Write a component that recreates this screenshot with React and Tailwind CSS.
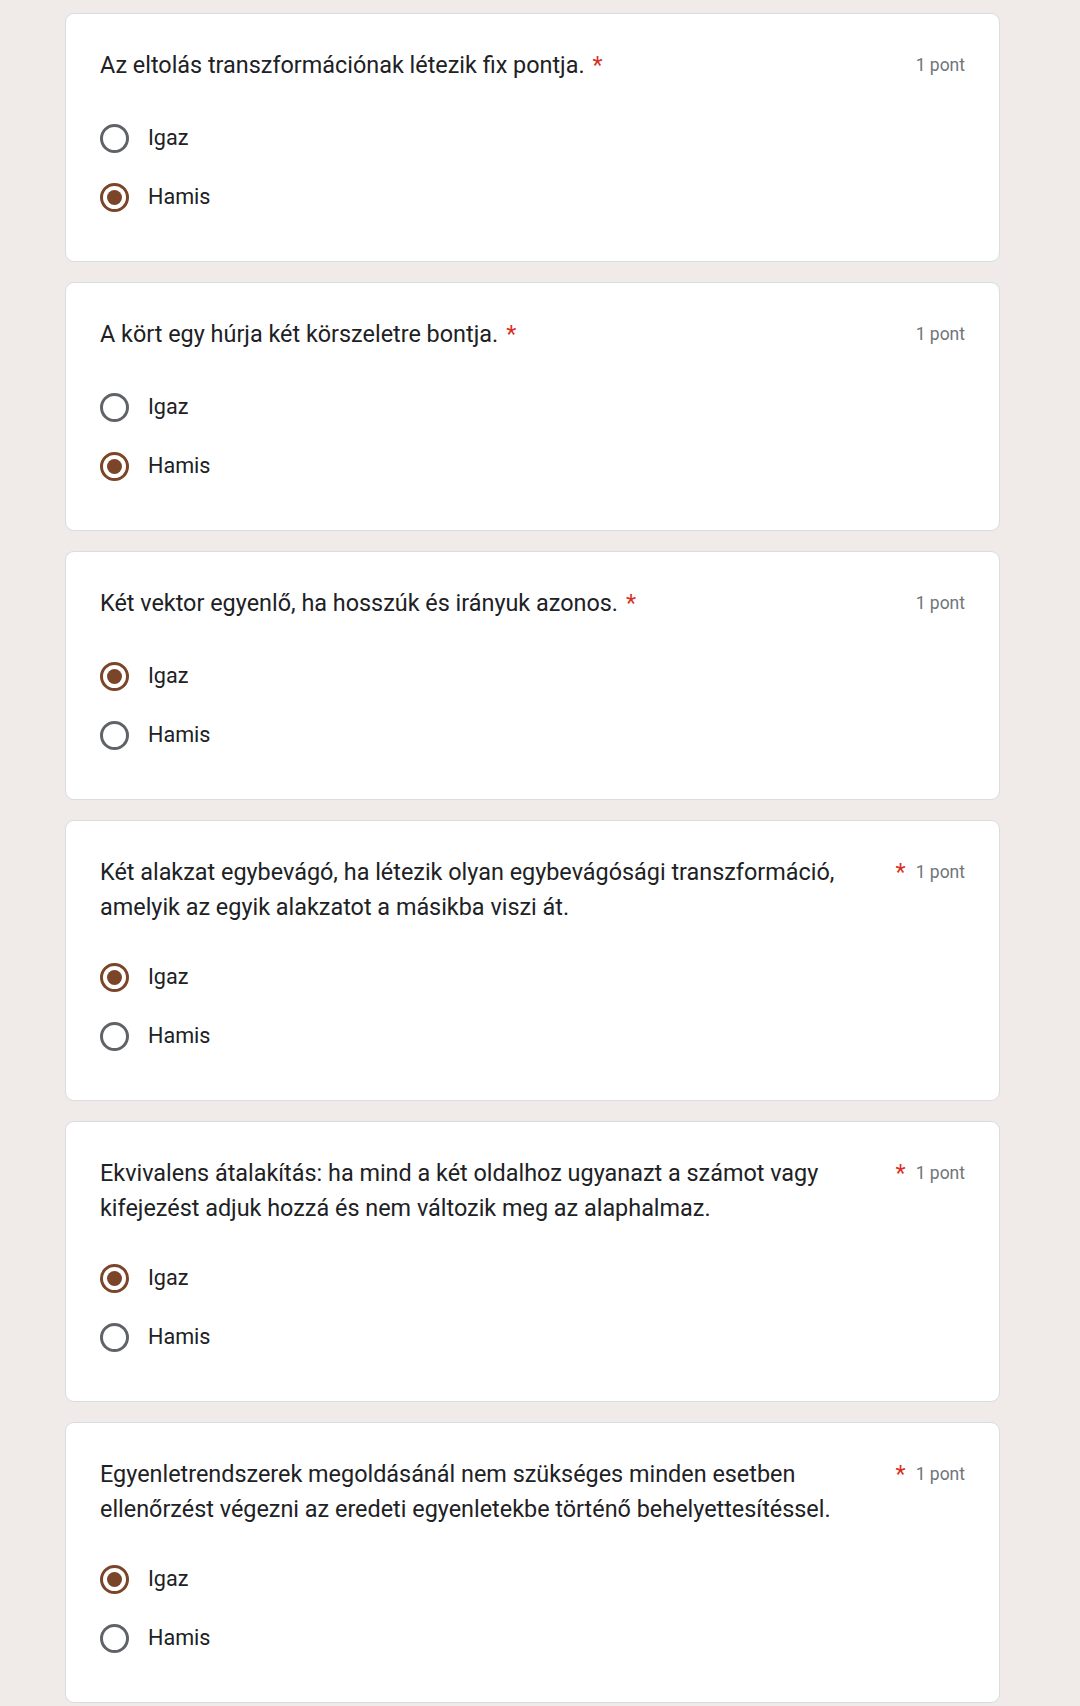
const questions = [
  { text: 'Az eltolás transzformációnak létezik fix pontja.', answer: 'Hamis' },
  { text: 'A kört egy húrja két körszeletre bontja.', answer: 'Hamis' },
  { text: 'Két vektor egyenlő, ha hosszúk és irányuk azonos.', answer: 'Igaz' },
  {
    text: 'Két alakzat egybevágó, ha létezik olyan egybevágósági transzformáció, amelyik az egyik alakzatot a másikba viszi át.',
    answer: 'Igaz',
  },
  {
    text: 'Ekvivalens átalakítás: ha mind a két oldalhoz ugyanazt a számot vagy kifejezést adjuk hozzá és nem változik meg az alaphalmaz.',
    answer: 'Igaz',
  },
  {
    text: 'Egyenletrendszerek megoldásánál nem szükséges minden esetben ellenőrzést végezni az eredeti egyenletekbe történő behelyettesítéssel.',
    answer: 'Igaz',
  },
];

function Radio({ checked }) {
  if (checked) {
    return (
      <span className="w-[29px] h-[29px] rounded-full border-[3px] border-[#7a4528] flex items-center justify-center shrink-0">
        <span className="w-[15px] h-[15px] rounded-full bg-[#7a4528]" />
      </span>
    );
  }
  return <span className="w-[29px] h-[29px] rounded-full border-[3px] border-[#5f6368] shrink-0" />;
}

function QuestionCard({ q }) {
  return (
    <div className="bg-white border border-[#dadce0] rounded-[9px] px-[34px] pt-[34px] pb-[34px]">
      <div className="flex items-start min-h-[38px]">
        <div className="flex-1 min-w-0 flex items-start">
          <span className="text-[23.4px] leading-[35px] text-[#202124]">{q.text}</span>
          <span className="text-[23.4px] leading-[35px] text-[#d93025] pl-[8px] shrink-0">*</span>
        </div>
        <span className="ml-[10px] shrink-0 text-[17.5px] leading-[35px] text-[#70757a]">1 pont</span>
      </div>
      <div className="mt-[23px] flex flex-col">
        {['Igaz', 'Hamis'].map((opt) => (
          <label key={opt} className="h-[59px] flex items-center gap-[19px]">
            <Radio checked={q.answer === opt} />
            <span className="text-[21.6px] text-[#202124]">{opt}</span>
          </label>
        ))}
      </div>
    </div>
  );
}

export default function App() {
  return (
    <div
      className="min-h-screen bg-[#f0ebe8] pt-[13px] pb-[4px]"
      style={{ fontFamily: 'Roboto, "Noto Sans", sans-serif' }}
    >
      <div className="ml-[65px] w-[935px] flex flex-col gap-[20px]">
        {questions.map((q, i) => (
          <QuestionCard key={i} q={q} />
        ))}
      </div>
    </div>
  );
}
